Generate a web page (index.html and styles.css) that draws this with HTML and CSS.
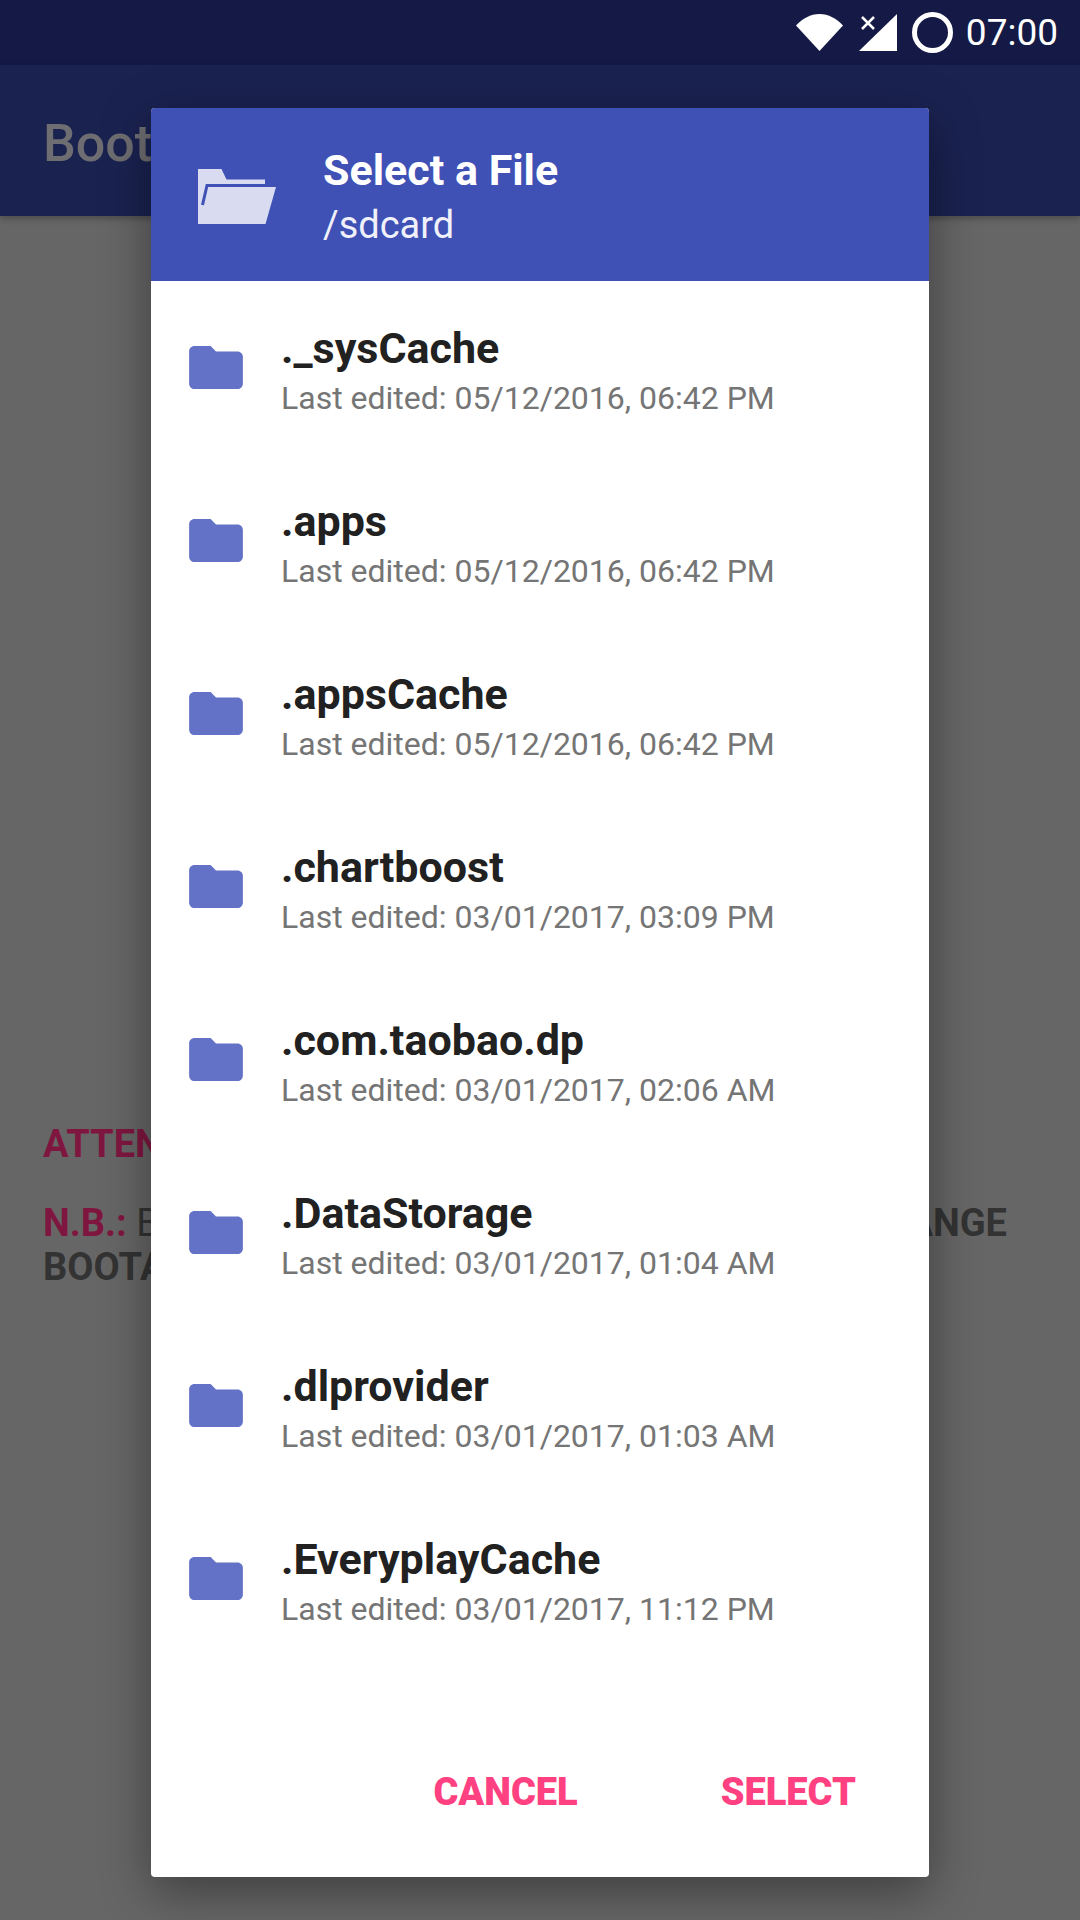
FILE: index.html
```html
<!DOCTYPE html>
<html lang="en">
<head>
<meta charset="utf-8">
<title>Select a File</title>
<link rel="stylesheet" href="styles.css">
</head>
<body>
<div class="screen">
  <div class="statusbar">
    <svg class="ic-wifi" viewBox="0 0 47 37"><path d="M0 11.500C6.500 4.500 14.500 0 23.500 0S40.500 4.500 47 11.500L23.500 37z"/></svg>
    <svg class="ic-signal" viewBox="0 0 38 37"><path d="M38 0V37H0z"/><path class="x" d="M3 3L15 15M15 3L3 15"/></svg>
    <svg class="ic-ring" viewBox="0 0 41 41"><circle cx="20.500" cy="20.500" r="18"/></svg>
    <span class="clock">07:00</span>
  </div>
  <div class="appbar"><span class="appbar-title">Boot</span></div>
  <main class="content">
    <p class="attention">ATTEN</p>
    <div class="note">
      <div class="note-line"><span><b class="nb">N.B.:</b> B</span><b>ANGE</b></div>
      <div class="note-line"><b>BOOTA</b></div>
    </div>
  </main>

  <section class="dialog">
    <header class="dialog-head">
      <svg class="ic-open" viewBox="0 0 78 55"><path class="fill" d="M0 0H23.500L28.500 10.500H67V18H78L67.500 55H0z"/><path class="gap" d="M67 16.500H9L4.500 36"/></svg>
      <div class="head-text">
        <div class="head-title">Select a File</div>
        <div class="head-path">/sdcard</div>
      </div>
    </header>
    <ul class="files">
      <li class="file"><svg class="ic-folder" viewBox="2 4 20 16"><path d="M10 4H4c-1.100 0-2 .9-2 2v12c0 1.100.9 2 2 2h16c1.100 0 2-.9 2-2V8c0-1.100-.9-2-2-2h-8l-2-2z"/></svg><div><div class="name">._sysCache</div><div class="meta">Last edited: 05/12/2016, 06:42 PM</div></div></li>
      <li class="file"><svg class="ic-folder" viewBox="2 4 20 16"><path d="M10 4H4c-1.100 0-2 .9-2 2v12c0 1.100.9 2 2 2h16c1.100 0 2-.9 2-2V8c0-1.100-.9-2-2-2h-8l-2-2z"/></svg><div><div class="name">.apps</div><div class="meta">Last edited: 05/12/2016, 06:42 PM</div></div></li>
      <li class="file"><svg class="ic-folder" viewBox="2 4 20 16"><path d="M10 4H4c-1.100 0-2 .9-2 2v12c0 1.100.9 2 2 2h16c1.100 0 2-.9 2-2V8c0-1.100-.9-2-2-2h-8l-2-2z"/></svg><div><div class="name">.appsCache</div><div class="meta">Last edited: 05/12/2016, 06:42 PM</div></div></li>
      <li class="file"><svg class="ic-folder" viewBox="2 4 20 16"><path d="M10 4H4c-1.100 0-2 .9-2 2v12c0 1.100.9 2 2 2h16c1.100 0 2-.9 2-2V8c0-1.100-.9-2-2-2h-8l-2-2z"/></svg><div><div class="name">.chartboost</div><div class="meta">Last edited: 03/01/2017, 03:09 PM</div></div></li>
      <li class="file"><svg class="ic-folder" viewBox="2 4 20 16"><path d="M10 4H4c-1.100 0-2 .9-2 2v12c0 1.100.9 2 2 2h16c1.100 0 2-.9 2-2V8c0-1.100-.9-2-2-2h-8l-2-2z"/></svg><div><div class="name">.com.taobao.dp</div><div class="meta">Last edited: 03/01/2017, 02:06 AM</div></div></li>
      <li class="file"><svg class="ic-folder" viewBox="2 4 20 16"><path d="M10 4H4c-1.100 0-2 .9-2 2v12c0 1.100.9 2 2 2h16c1.100 0 2-.9 2-2V8c0-1.100-.9-2-2-2h-8l-2-2z"/></svg><div><div class="name">.DataStorage</div><div class="meta">Last edited: 03/01/2017, 01:04 AM</div></div></li>
      <li class="file"><svg class="ic-folder" viewBox="2 4 20 16"><path d="M10 4H4c-1.100 0-2 .9-2 2v12c0 1.100.9 2 2 2h16c1.100 0 2-.9 2-2V8c0-1.100-.9-2-2-2h-8l-2-2z"/></svg><div><div class="name">.dlprovider</div><div class="meta">Last edited: 03/01/2017, 01:03 AM</div></div></li>
      <li class="file"><svg class="ic-folder" viewBox="2 4 20 16"><path d="M10 4H4c-1.100 0-2 .9-2 2v12c0 1.100.9 2 2 2h16c1.100 0 2-.9 2-2V8c0-1.100-.9-2-2-2h-8l-2-2z"/></svg><div><div class="name">.EveryplayCache</div><div class="meta">Last edited: 03/01/2017, 11:12 PM</div></div></li>
    </ul>
    <footer class="actions">
      <span class="action">CANCEL</span>
      <span class="action">SELECT</span>
    </footer>
  </section>
</div>
</body>
</html>
```
FILE: styles.css
```css
* { box-sizing: border-box; }
html, body { margin: 0; padding: 0; }
body { font-family: Roboto, "Liberation Sans", sans-serif; background: #666666; }
.screen { position: relative; width: 1080px; height: 1920px; overflow: hidden; background: #666666; display: flex; flex-direction: column; }

.statusbar { height: 65px; flex: none; background: #141a45; display: flex; align-items: center; justify-content: flex-end; padding-right: 22px; color: #fff; }
.ic-wifi { width: 47px; height: 37px; fill: #fff; margin-right: 16px; }
.ic-signal { width: 38px; height: 37px; fill: #fff; margin-right: 15px; }
.ic-signal .x { fill: none; stroke: #fff; stroke-width: 2.500px; }
.ic-ring { width: 41px; height: 41px; fill: none; stroke: #fff; stroke-width: 5px; margin-right: 13px; }
.clock { font-size: 37px; line-height: 65px; }

.appbar { height: 151px; flex: none; background: #1a2250; display: flex; align-items: center; padding: 5px 0 0 43px; box-shadow: 0 3px 6px rgba(0,0,0,.25); }
.appbar-title { font-size: 52px; font-weight: 500; color: #6e6e72; }

.content { flex: 1; padding: 904px 73px 0 43px; font-size: 38px; color: #333; }
.attention { margin: 0 0 33px; font-size: 38px; font-weight: 700; line-height: 48px; color: #7f1640; }
.note { line-height: 44px; }
.note-line { display: flex; justify-content: space-between; }
.note b { font-weight: 700; }
.note .nb { color: #7f1640; }

.dialog { position: absolute; left: 151px; top: 108px; width: 778px; height: 1769px; background: #fff; border-radius: 4px; display: flex; flex-direction: column; box-shadow: 0 14px 50px rgba(0,0,0,.4); }
.dialog-head { height: 173px; flex: none; background: #3f51b5; border-radius: 4px 4px 0 0; display: flex; align-items: center; padding-left: 47px; }
.ic-open { width: 78px; height: 55px; margin-right: 47px; margin-top: 3px; }
.ic-open .fill { fill: #d9dcf0; }
.ic-open .gap { fill: none; stroke: #3f51b5; stroke-width: 3px; }
.head-text { padding-top: 10px; }
.head-title { font-size: 43px; font-weight: 700; line-height: 50px; color: #fff; }
.head-path { font-size: 38px; line-height: 60px; color: #f0f1fa; }

.files { list-style: none; margin: 0; padding: 0; }
.file { height: 173px; display: flex; align-items: center; padding-left: 38px; gap: 38px; }
.file > div { padding-top: 9px; }
.ic-folder { width: 54px; height: 43px; fill: #6372c6; flex: none; }
.name { font-size: 43px; font-weight: 700; line-height: 50px; color: #212121; }
.meta { margin-top: 1px; font-size: 32px; line-height: 48px; color: #757575; }

.actions { flex: 1; display: flex; justify-content: flex-end; align-items: flex-start; gap: 143px; padding: 105px 73px 0 0; }
.action { font-size: 38px; font-weight: 900; line-height: 44px; color: #ff4081; }
```
